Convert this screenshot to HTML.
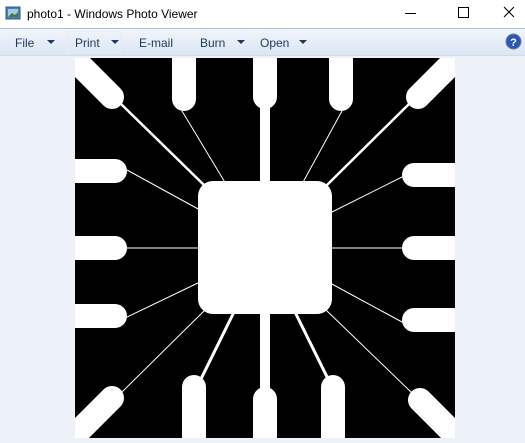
<!DOCTYPE html>
<html><head><style>
body{margin:0;width:525px;height:443px;overflow:hidden;background:#edf2f9;font-family:"Liberation Sans",sans-serif;position:relative}
.t{position:absolute;left:0;top:0;width:525px;height:28px;background:#fff}
.tb{position:absolute;left:0;top:28px;width:525px;height:28px;background:linear-gradient(#f1f5fb,#dbe6f4);border-top:1px solid #aebfd6;border-bottom:1px solid #d0dbea;box-sizing:border-box}
.m{position:absolute;top:36px;font-size:12px;color:#1e395b}
.a{position:absolute;top:40px;width:0;height:0;border-left:4px solid transparent;border-right:4px solid transparent;border-top:4px solid #1e395b}
</style></head><body>
<div class="t"></div>
<svg style="position:absolute;left:5px;top:6px" width="16" height="15"><rect x="1" y="1" width="14" height="12" fill="#4d7fb2" stroke="#2a5a8a"/><rect x="3" y="3" width="10" height="8" fill="#a8c8e0"/><path d="M3 11 L7 7 L10 9 L13 6 L13 11Z" fill="#4a7a3a"/></svg>
<div style="position:absolute;left:27px;top:7px;font-size:12px;color:#000">photo1 - Windows Photo Viewer</div>
<div style="position:absolute;left:405px;top:13px;width:11px;height:1px;background:#000"></div>
<div style="position:absolute;left:458px;top:7px;width:9px;height:9px;border:1px solid #000"></div>
<svg style="position:absolute;left:503px;top:6px" width="12" height="12"><path d="M1 1L11 11M11 1L1 11" stroke="#000" stroke-width="1"/></svg>
<div class="tb"></div>
<div style="position:absolute;left:67px;top:31px;width:54px;height:22px;border:1px solid #e6edf6;border-radius:2px;box-sizing:border-box"></div>
<span class="m" style="left:15px">File</span><div class="a" style="left:47px"></div>
<span class="m" style="left:75px">Print</span><div class="a" style="left:111px"></div>
<span class="m" style="left:139px">E-mail</span>
<span class="m" style="left:200px">Burn</span><div class="a" style="left:237px"></div>
<span class="m" style="left:260px">Open</span><div class="a" style="left:299px"></div>
<svg style="position:absolute;left:505px;top:33px" width="17" height="17"><circle cx="8.5" cy="8.5" r="7.5" fill="#2b57b5" stroke="#6d7e99"/><text x="8.5" y="13" font-size="11" font-weight="bold" fill="#fff" text-anchor="middle" font-family="Liberation Sans">?</text></svg>
<svg style="position:absolute;left:0;top:0" width="525" height="443">
<defs><clipPath id="c"><rect x="75" y="58" width="380" height="380"/></clipPath></defs>
<rect x="75" y="58" width="380" height="380" fill="#000"/>
<g clip-path="url(#c)" stroke="#fff" stroke-linecap="round" fill="none">
<g stroke-width="24">
<path d="M112 97L50 35M418 97L480 35M112 398L50 460M420 400L482 462"/>
<path d="M184 99V30M265 97V30M341 99V30"/>
<path d="M194 387V460M265 399V460M333 387V460"/>
<path d="M115 171H40M115 248H40M115 316H40"/>
<path d="M414 175H490M414 248H490M414 320H490"/>
</g>
<path d="M265 100V200M265 300V420" stroke-width="10" stroke-linecap="butt"/>
<path d="M120 103L205 186M410 103L326 186" stroke-width="2.5"/>
<path d="M197 387L235 310M332 387L294 310" stroke-width="3"/>
<g stroke-width="1">
<path d="M182 111L226 184M342 111L302 184M127 170L200 210M127 248H200M127 317L200 282M402 177L330 213M402 248H330M402 322L330 283M122 392L205 310M412 393L326 310"/>
</g>
</g>
<rect x="198" y="181" width="134" height="133" rx="15" fill="#fff"/>
</svg>
</body></html>
